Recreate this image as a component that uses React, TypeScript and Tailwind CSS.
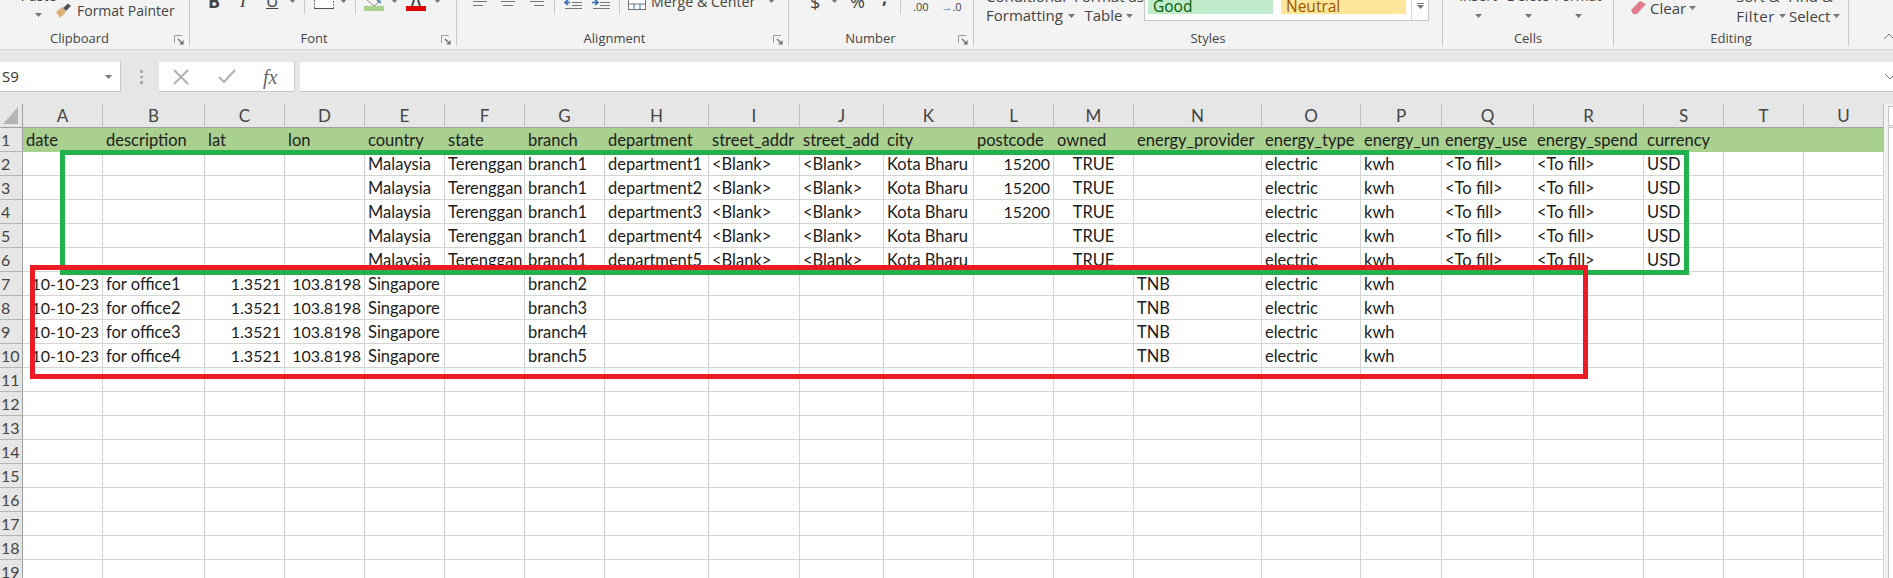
import React, { FC, ReactNode } from "react";

const cols = ["A","B","C","D","E","F","G","H","I","J","K","L","M","N","O","P","Q","R","S","T","U"];

type Align = "l" | "r" | "c";
type Cell = [string, Align?];

const header: Cell[] = ["date","description","lat","lon","country","state","branch","department","street_addr","street_add","city","postcode","owned","energy_provider","energy_type","energy_un","energy_use","energy_spend","currency","",""].map((t) => [t]);

const greenRow = (n: number, post: string): Cell[] => [
  [""],[""],[""],[""],["Malaysia"],["Terenggan"],["branch1"],[`department${n}`],["<Blank>"],["<Blank>"],["Kota Bharu"],[post,"r"],["TRUE","c"],[""],["electric"],["kwh"],["<To fill>"],["<To fill>"],["USD"],[""],[""],
];

const redRow = (n: number): Cell[] => [
  ["10-10-23","r"],[`for office${n}`],["1.3521","r"],["103.8198","r"],["Singapore"],[""],[`branch${n + 1}`],[""],[""],[""],[""],[""],[""],["TNB"],["electric"],["kwh"],[""],[""],[""],[""],[""],
];

const blankRow: Cell[] = cols.map(() => [""]);

const rows: Cell[][] = [
  header,
  greenRow(1, "15200"), greenRow(2, "15200"), greenRow(3, "15200"), greenRow(4, ""), greenRow(5, ""),
  redRow(1), redRow(2), redRow(3), redRow(4),
  ...Array.from({ length: 9 }, () => blankRow),
];

const Caret: FC<{ className?: string }> = ({ className }) => (
  <svg width="7" height="4" viewBox="0 0 7 4" className={`shrink-0 ${className ?? ""}`}>
    <polygon points="0,0 7,0 3.5,4" fill="#777" />
  </svg>
);

const Sep: FC<{ className?: string }> = ({ className }) => (
  <div className={`w-px h-[14px] bg-[#c6c6c6] shrink-0 ${className ?? ""}`} />
);

const Launcher = () => (
  <svg width="10" height="10" viewBox="0 0 10 10" className="absolute right-[5px] top-[1px]">
    <path d="M0.5 8V0.5H8" fill="none" stroke="#9a9a9a" />
    <path d="M4 4L8.5 8.5M9 5.5V9H5.5" fill="none" stroke="#666" strokeWidth="1.2" />
  </svg>
);

const Group: FC<{ w: string; label: string; labelPad?: string; launcher?: boolean; children: ReactNode }> = ({ w, label, labelPad, launcher, children }) => (
  <div className={`${w} shrink-0 h-[46px] border-r border-[#c6c6c6] flex flex-col`}>
    <div className="h-[32px] overflow-hidden flex items-start">{children}</div>
    <div className={`relative h-[14px] flex items-center justify-center text-[13px] text-[#444] ${labelPad ?? ""}`}>
      {label}
    </div>
    {launcher && (
      <div className="relative">
        <div className="absolute right-0 -top-[12px] w-[15px] h-[10px]">
          <Launcher />
        </div>
      </div>
    )}
  </div>
);

const AlignIcon: FC<{ a: number; b: number; c?: string }> = ({ a, b, c }) => (
  <svg width="16" height="7" viewBox="0 0 16 7" className={`shrink-0 ${c ?? ""}`}>
    <path d={`M${a} 1.5H${a + 14}M${b} 5.5H${b + 10}`} stroke="#777" fill="none" />
  </svg>
);

const IndentIcon: FC<{ flip?: boolean; c?: string }> = ({ flip, c }) => (
  <svg width="18" height="10" viewBox="0 0 18 10" className={`shrink-0 ${c ?? ""}`}>
    <path d="M8 2.5H18M8 5.5H18M1 8.5H18" stroke="#777" fill="none" />
    {flip ? (
      <path d="M0 2.5H5M3 0L6 2.5L3 5" stroke="#2e6db4" strokeWidth="1.6" fill="none" />
    ) : (
      <path d="M6 2.5H1M4 0L1 2.5L4 5" stroke="#2e6db4" strokeWidth="1.6" fill="none" />
    )}
  </svg>
);

const Ribbon = () => (
  <div className="h-[50px] bg-[#f3f3f3] border-b border-[#d2d2d2] flex overflow-hidden font-['Open_Sans',sans-serif] text-[#444]">
    <Group w="w-[190px]" label="Clipboard" labelPad="pr-[30px]" launcher>
      <div className="ml-[22px] w-[33px] flex flex-col items-center -mt-[13px] shrink-0">
        <span className="text-[14px] leading-[18px] h-[18px]">Paste</span>
        <Caret className="mt-[8px]" />
      </div>
      <svg width="17" height="16" viewBox="0 0 17 16" className="mt-[3px] shrink-0">
        <path d="M1 9L7 4L11 9L5 15Z" fill="#dcb27a" />
        <path d="M8 5L13 0.5L16 3L11 8Z" fill="#555" />
      </svg>
      <span className="ml-[5px] mt-[1px] text-[14px] leading-[20px] whitespace-nowrap">Format Painter</span>
    </Group>
    <Group w="w-[267px]" label="Font" labelPad="pr-[18px]" launcher>
      <span className="ml-[18px] w-[12px] -mt-[10px] text-[18px] leading-[22px] font-bold">B</span>
      <span className="ml-[20px] w-[8px] -mt-[10px] text-[18px] leading-[22px] italic font-['Liberation_Serif',serif]">I</span>
      <span className="ml-[18px] w-[11px] -mt-[10px] text-[17px] leading-[22px] underline">U</span>
      <Caret className="ml-[12px] -mt-[1px]" />
      <Sep className="ml-[8px]" />
      <svg width="20" height="9" viewBox="0 0 20 9" className="ml-[9px] shrink-0">
        <path d="M0.5 0V8.5H19.5V0" fill="#fff" stroke="#777" strokeDasharray="2 1" />
        <path d="M0 8.5H20" stroke="#555" />
      </svg>
      <Caret className="ml-[6px] -mt-[1px]" />
      <Sep className="ml-[8px]" />
      <svg width="20" height="11" viewBox="0 0 20 11" className="ml-[8px] shrink-0">
        <path d="M3 0L10 6L17 0" fill="none" stroke="#888" />
        <path d="M13 0L17 3" stroke="#2e6db4" strokeWidth="1.5" />
        <rect x="0" y="6" width="20" height="5" fill="#a9d18e" />
      </svg>
      <Caret className="ml-[7px] -mt-[1px]" />
      <svg width="20" height="11" viewBox="0 0 20 11" className="ml-[8px] shrink-0">
        <path d="M6 6L8 0M14 6L12 0" stroke="#444" strokeWidth="2" />
        <rect x="0" y="6" width="20" height="5" fill="#e00000" />
      </svg>
      <Caret className="ml-[8px] -mt-[1px]" />
    </Group>
    <Group w="w-[332px]" label="Alignment" labelPad="pr-[16px]" launcher>
      <AlignIcon a={0} b={0} c="ml-[16px]" />
      <AlignIcon a={1} b={3} c="ml-[11px]" />
      <AlignIcon a={1} b={5} c="ml-[13px]" />
      <Sep className="ml-[9px]" />
      <IndentIcon c="ml-[9px]" />
      <IndentIcon flip c="ml-[10px]" />
      <Sep className="ml-[9px]" />
      <svg width="18" height="10" viewBox="0 0 18 10" className="ml-[8px] shrink-0">
        <rect x="0.5" y="-2" width="17" height="11.5" fill="#fff" stroke="#777" />
        <path d="M0 4H18" stroke="#777" />
        <path d="M6 4V10M12 4V10" stroke="#2e6db4" />
      </svg>
      <span className="ml-[5px] -mt-[7px] text-[14.2px] leading-[18px] whitespace-nowrap">Merge &amp; Center</span>
      <Caret className="ml-[13px] -mt-[1px]" />
    </Group>
    <Group w="w-[185px]" label="Number" labelPad="pr-[21px]" launcher>
      <span className="ml-[21px] w-[11px] -mt-[9px] text-[18px] leading-[22px]">$</span>
      <Caret className="ml-[10px] -mt-[1px]" />
      <span className="ml-[12px] w-[16px] -mt-[10px] text-[18px] leading-[22px]">%</span>
      <span className="ml-[16px] w-[6px] -mt-[14px] text-[18px] leading-[22px] font-bold">,</span>
      <Sep className="ml-[12px]" />
      <span className="ml-[12px] mt-[1px] text-[11px] leading-[12px]">.00</span>
      <span className="ml-[13px] mt-[1px] text-[11px] leading-[12px] whitespace-nowrap">
        <span className="text-[#2e6db4] font-bold">→</span>.0
      </span>
    </Group>
    <Group w="w-[469px]" label="Styles">
      <div className="ml-[12px] w-[88px] shrink-0 -mt-[13px] flex flex-col text-[15px] leading-[19px] whitespace-nowrap">
        <span>Conditional</span>
        <span className="flex items-center gap-[5px]">Formatting<Caret /></span>
      </div>
      <div className="w-[70px] shrink-0 -mt-[13px] flex flex-col items-center text-[15px] leading-[19px] whitespace-nowrap">
        <span>Format as</span>
        <span className="flex items-center gap-[4px]">Table<Caret /></span>
      </div>
      <div className="w-[285px] h-[21px] bg-white border border-t-0 border-[#c6c6c6] flex shrink-0">
        <div className="ml-[3px] w-[125px] h-[14px] bg-[#c0eccb] text-[#006100] text-[15.5px] leading-[12px] pl-[5px] overflow-hidden flex items-end">
          <span className="mb-[2px] whitespace-nowrap">Good</span>
        </div>
        <div className="ml-[8px] w-[125px] h-[14px] bg-[#ffe699] text-[#9c5700] text-[15.5px] leading-[12px] pl-[5px] overflow-hidden flex items-end">
          <span className="mb-[2px] whitespace-nowrap">Neutral</span>
        </div>
        <div className="ml-[5px] flex-1 border-l border-[#d6d6d6] flex flex-col items-center pt-[3px] gap-[1px]">
          <div className="w-[7px] h-px bg-[#777]" />
          <Caret />
        </div>
      </div>
    </Group>
    <Group w="w-[171px]" label="Cells">
      {["Insert", "Delete", "Format"].map((t, i) => (
        <div key={t} className={`${i === 0 ? "ml-[10px]" : ""} w-[50px] -mt-[13px] flex flex-col items-center shrink-0`}>
          <span className="text-[14px] leading-[18px] h-[18px]">{t}</span>
          <Caret className="mt-[9px]" />
        </div>
      ))}
    </Group>
    <Group w="w-[235px]" label="Editing">
      <svg width="17" height="16" viewBox="0 0 17 16" className="ml-[16px] shrink-0">
        <path d="M1 10L10 1L16 4L7 14L3 14Z" fill="#e37c8a" />
      </svg>
      <span className="ml-[3px] -mt-[1px] text-[15px] leading-[18px]">Clear</span>
      <Caret className="ml-[3px] mt-[6px]" />
      <div className="ml-[40px] -mt-[14px] flex flex-col text-[15px] leading-[20px] whitespace-nowrap">
        <span className="flex"><span className="w-[52px]">Sort &amp;</span><span>Find &amp;</span></span>
        <span className="flex items-center">
          <span className="tracking-[0.6px]">Filter</span><Caret className="ml-[4px]" />
          <span className="ml-[3px]">Select</span><Caret className="ml-[3px]" />
        </span>
      </div>
    </Group>
    <svg width="10" height="8" viewBox="0 0 10 8" className="ml-[35px] mt-[33px] shrink-0">
      <path d="M0 6L5 1L10 6" fill="none" stroke="#777" />
    </svg>
  </div>
);

const FormulaBar = () => (
  <div className="h-[54px] bg-[#e6e6e6] pt-[12px] font-['Open_Sans',sans-serif]">
    <div className="h-[30px] flex">
      <div className="w-[121px] bg-white border-r border-b border-[#c8c8c8] flex items-center justify-between pl-[2px] pr-[8px] text-[15px] text-[#333]">
        S9
        <Caret />
      </div>
      <div className="ml-[19px] w-[3px] flex flex-col gap-[3px] py-[8px]">
        <div className="h-[3px] bg-[#aaa]" />
        <div className="h-[3px] bg-[#aaa]" />
        <div className="h-[3px] bg-[#aaa]" />
      </div>
      <div className="ml-[16px] w-[136px] bg-white border-r border-b border-[#c8c8c8] flex items-center">
        <svg width="16" height="16" viewBox="0 0 16 16" className="ml-[14px]">
          <path d="M1 1L15 15M15 1L1 15" stroke="#b0b0b0" strokeWidth="2" />
        </svg>
        <svg width="18" height="15" viewBox="0 0 18 15" className="ml-[29px]">
          <path d="M1 8L6 13L17 1" fill="none" stroke="#b0b0b0" strokeWidth="2" />
        </svg>
        <span className="ml-[27px] font-['Liberation_Serif',serif] italic text-[20px] text-[#666]">fx</span>
      </div>
      <div className="ml-[5px] flex-1 bg-white border-b border-[#c8c8c8] flex items-center justify-end overflow-hidden">
        <svg width="8" height="8" viewBox="0 0 8 8" className="shrink-0">
          <path d="M0 1L5 6L10 1" fill="none" stroke="#777" />
        </svg>
      </div>
    </div>
  </div>
);

const Sheet = () => (
  <div className="relative flex h-[474px] overflow-hidden font-['Lato',sans-serif] text-[16.5px] text-[#1c1c1c]">
    <div className="w-[1884px] shrink-0 grid grid-cols-[23px_80px_102px_80px_80px_80px_80px_80px_104px_91px_84px_90px_80px_80px_128px_99px_81px_92px_110px_80px_80px_80px] auto-rows-[24px] bg-white">
      <div className="bg-[#e6e6e6] border-r border-b border-[#a0a0a0] flex items-center justify-center">
        <svg width="16" height="18" viewBox="0 0 16 18">
          <polygon points="15,0 15,17 0,17" fill="#b4b4b4" />
        </svg>
      </div>
      {cols.map((c) => (
        <div key={c} className="bg-[#e6e6e6] border-r border-r-[#bdbdbd] border-b border-b-[#a0a0a0] flex items-center justify-center text-[17px] text-[#444]">
          {c}
        </div>
      ))}
      {rows.map((row, r) => (
        <React.Fragment key={r}>
          <div className="bg-[#e6e6e6] border-r border-r-[#a0a0a0] border-b border-b-[#b5b5b5] flex items-center pl-px text-[16px] text-[#444] overflow-hidden">
            {r + 1}
          </div>
          {row.map(([text, align], c) => (
            <div
              key={c}
              className={`flex items-center overflow-hidden whitespace-nowrap ${
                r === 0 ? "bg-[#a9d08e]" : "border-r border-b border-[#d4d4d4]"
              } ${align === "r" ? "justify-end pr-[3px] text-[16px]" : align === "c" ? "justify-center pt-px" : "justify-start pl-[3px] pt-px"}`}
            >
              {text}
            </div>
          ))}
        </React.Fragment>
      ))}
    </div>
    <div className="flex-1 bg-[#f1f1f1] pl-[4px] pt-[2px]">
      <div className="h-[20px] bg-white border border-r-0 border-[#c4c4c4]" />
      <div className="h-full mt-[1px] bg-white border border-r-0 border-[#c4c4c4]" />
    </div>
    <div className="absolute left-[60px] top-[46px] w-[1629px] h-[125px] border-[5px] border-[#22b14c]" />
    <div className="absolute left-[30px] top-[161px] w-[1558px] h-[114px] border-[5px] border-[#ed1c24]" />
  </div>
);

const App = () => (
  <div className="w-[1893px] h-[578px] overflow-hidden bg-white">
    <Ribbon />
    <FormulaBar />
    <Sheet />
  </div>
);

export default App;
